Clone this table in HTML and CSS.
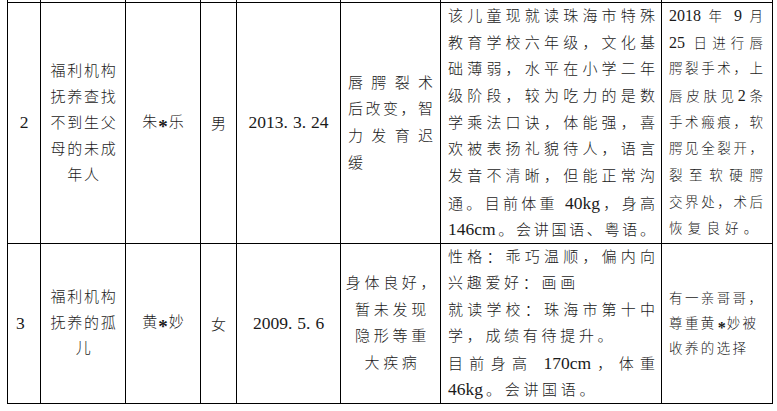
FILE: index.html
```html
<!DOCTYPE html>
<html lang="zh-CN">
<head>
<meta charset="utf-8">
<title>儿童信息表</title>
<link rel="stylesheet" href="styles.css">
</head>
<body>
<table class="sheet">
  <colgroup>
    <col class="c-num"><col class="c-cat"><col class="c-name"><col class="c-sex"><col class="c-date"><col class="c-health"><col class="c-desc"><col class="c-note">
  </colgroup>
  <tr class="stub"><td></td><td></td><td></td><td></td><td></td><td></td><td></td><td></td></tr>
  <tr class="r1">
    <td class="num"><span class="en">2</span></td>
    <td class="cat">
      <div class="ln">福利机构</div>
      <div class="ln">抚养查找</div>
      <div class="ln">不到生父</div>
      <div class="ln">母的未成</div>
      <div class="ln">年人</div>
    </td>
    <td class="name">朱<span class="ast">*</span>乐</td>
    <td class="sex">男</td>
    <td class="date"><span class="en">2013<span class="dot">.</span>3<span class="dot">.</span>24</span></td>
    <td class="health left">
      <div class="ln j">唇腭裂术</div>
      <div class="ln j">后改变，智</div>
      <div class="ln j">力发育迟</div>
      <div class="ln">缓</div>
    </td>
    <td class="desc">
      <div class="ln j">该儿童现就读珠海市特殊</div>
      <div class="ln j">教育学校六年级，文化基</div>
      <div class="ln j">础薄弱，水平在小学二年</div>
      <div class="ln j">级阶段，较为吃力的是数</div>
      <div class="ln j">学乘法口诀，体能强，喜</div>
      <div class="ln j">欢被表扬礼貌待人，语言</div>
      <div class="ln j">发音不清晰，但能正常沟</div>
      <div class="ln j">通。目前体重 <span class="en">40kg</span>，身高</div>
      <div class="ln j"><span class="en">146cm</span>。会讲国语、粤语。</div>
    </td>
    <td class="note">
      <div class="ln j"><span class="en">2018</span> 年 <span class="en">9</span> 月</div>
      <div class="ln j"><span class="en">25</span> 日进行唇</div>
      <div class="ln j">腭裂手术，上</div>
      <div class="ln j">唇皮肤见<span class="en">2</span>条</div>
      <div class="ln j">手术瘢痕，软</div>
      <div class="ln j">腭见全裂开，</div>
      <div class="ln j">裂至软硬腭</div>
      <div class="ln j">交界处，术后</div>
      <div class="ln sp">恢复良好。</div>
    </td>
  </tr>
  <tr class="r2">
    <td class="num num-left"><span class="en">3</span></td>
    <td class="cat cat2">
      <div class="ln">福利机构</div>
      <div class="ln">抚养的孤</div>
      <div class="ln">儿</div>
    </td>
    <td class="name">黄<span class="ast">*</span>妙</td>
    <td class="sex">女</td>
    <td class="date"><span class="en">2009<span class="dot">.</span>5<span class="dot">.</span>6</span></td>
    <td class="health center">
      <div class="ln">身体良好，</div>
      <div class="ln">暂未发现</div>
      <div class="ln">隐形等重</div>
      <div class="ln">大疾病</div>
    </td>
    <td class="desc desc2">
      <div class="ln j">性格：乖巧温顺，偏内向</div>
      <div class="ln sp">兴趣爱好：画画</div>
      <div class="ln j">就读学校：珠海市第十中</div>
      <div class="ln sp">学，成绩有待提升。</div>
      <div class="ln j">目前身高 <span class="en">170cm</span>，体重</div>
      <div class="ln sp"><span class="en">46kg</span>。会讲国语。</div>
    </td>
    <td class="note note2">
      <div class="ln">有一亲哥哥，</div>
      <div class="ln">尊重黄<span class="ast">*</span>妙被</div>
      <div class="ln">收养的选择</div>
    </td>
  </tr>
</table>
</body>
</html>
```

FILE: styles.css
```css
html, body {
  margin: 0;
  padding: 0;
  background: #ffffff;
}

body {
  font-family: "Liberation Serif", "Noto Sans CJK SC", serif;
  font-size: 15px;
  font-weight: 300;
  color: #1a1a1a;
}

.sheet {
  border-collapse: collapse;
  table-layout: fixed;
  width: 765px;
  margin-left: 7px;
}

.c-num { width: 33px; }
.c-cat { width: 85px; }
.c-name { width: 75px; }
.c-sex { width: 36px; }
.c-date { width: 104px; }
.c-health { width: 100px; }
.c-desc { width: 221px; }
.c-note { width: 111px; }

.sheet td {
  border: 1px solid #000;
  padding: 0;
  vertical-align: middle;
}

.stub td {
  height: 2px;
  border-top: none;
}

.r1 { height: 240px; }
.r2 { height: 160px; }

.ln {
  height: 26.67px;
  line-height: 26.67px;
  white-space: nowrap;
}

.j {
  text-align: justify;
  text-align-last: justify;
  white-space: normal;
}

.en {
  font-size: 17.5px;
  letter-spacing: 0;
}

.dot {
  margin-right: 5px;
}

.ast {
  display: inline-block;
  font-size: 19px;
  font-weight: 700;
  vertical-align: -6px;
  line-height: 1;
  margin: 0 1px;
}

.num {
  text-align: center;
}

.num-left {
  text-align: left;
  padding-left: 8px !important;
}

.cat {
  text-align: center;
  letter-spacing: 1.7px;
  padding-left: 2px !important;
}

.cat .ln {
  height: 26px;
  line-height: 26px;
}

.cat2 .ln {
  height: 25.5px;
  line-height: 25.5px;
}

.name {
  text-align: center;
}

.sex {
  text-align: center;
}

.date {
  text-align: center;
}

.health {
  padding: 0 7px !important;
}

.health.center {
  text-align: center;
  letter-spacing: 3.7px;
  padding: 0 0 0 4px !important;
}

.desc {
  padding: 0 6px 0 7px !important;
}

.desc .sp {
  letter-spacing: 3.7px;
}

.desc .sp .en {
  letter-spacing: 0;
  margin-right: 3px;
}

.desc2 .ln {
  height: 26.5px;
  line-height: 26.5px;
}

.note {
  font-size: 13.5px;
  padding: 0 9px 0 7px !important;
}

.note .en {
  font-size: 16px;
}

.note .sp {
  letter-spacing: 5.2px;
}

.note2 .ln {
  height: 25px;
  line-height: 25px;
  letter-spacing: 2.4px;
}

.note2 .ast {
  font-size: 16px;
  vertical-align: -5px;
  letter-spacing: 0;
}
```
